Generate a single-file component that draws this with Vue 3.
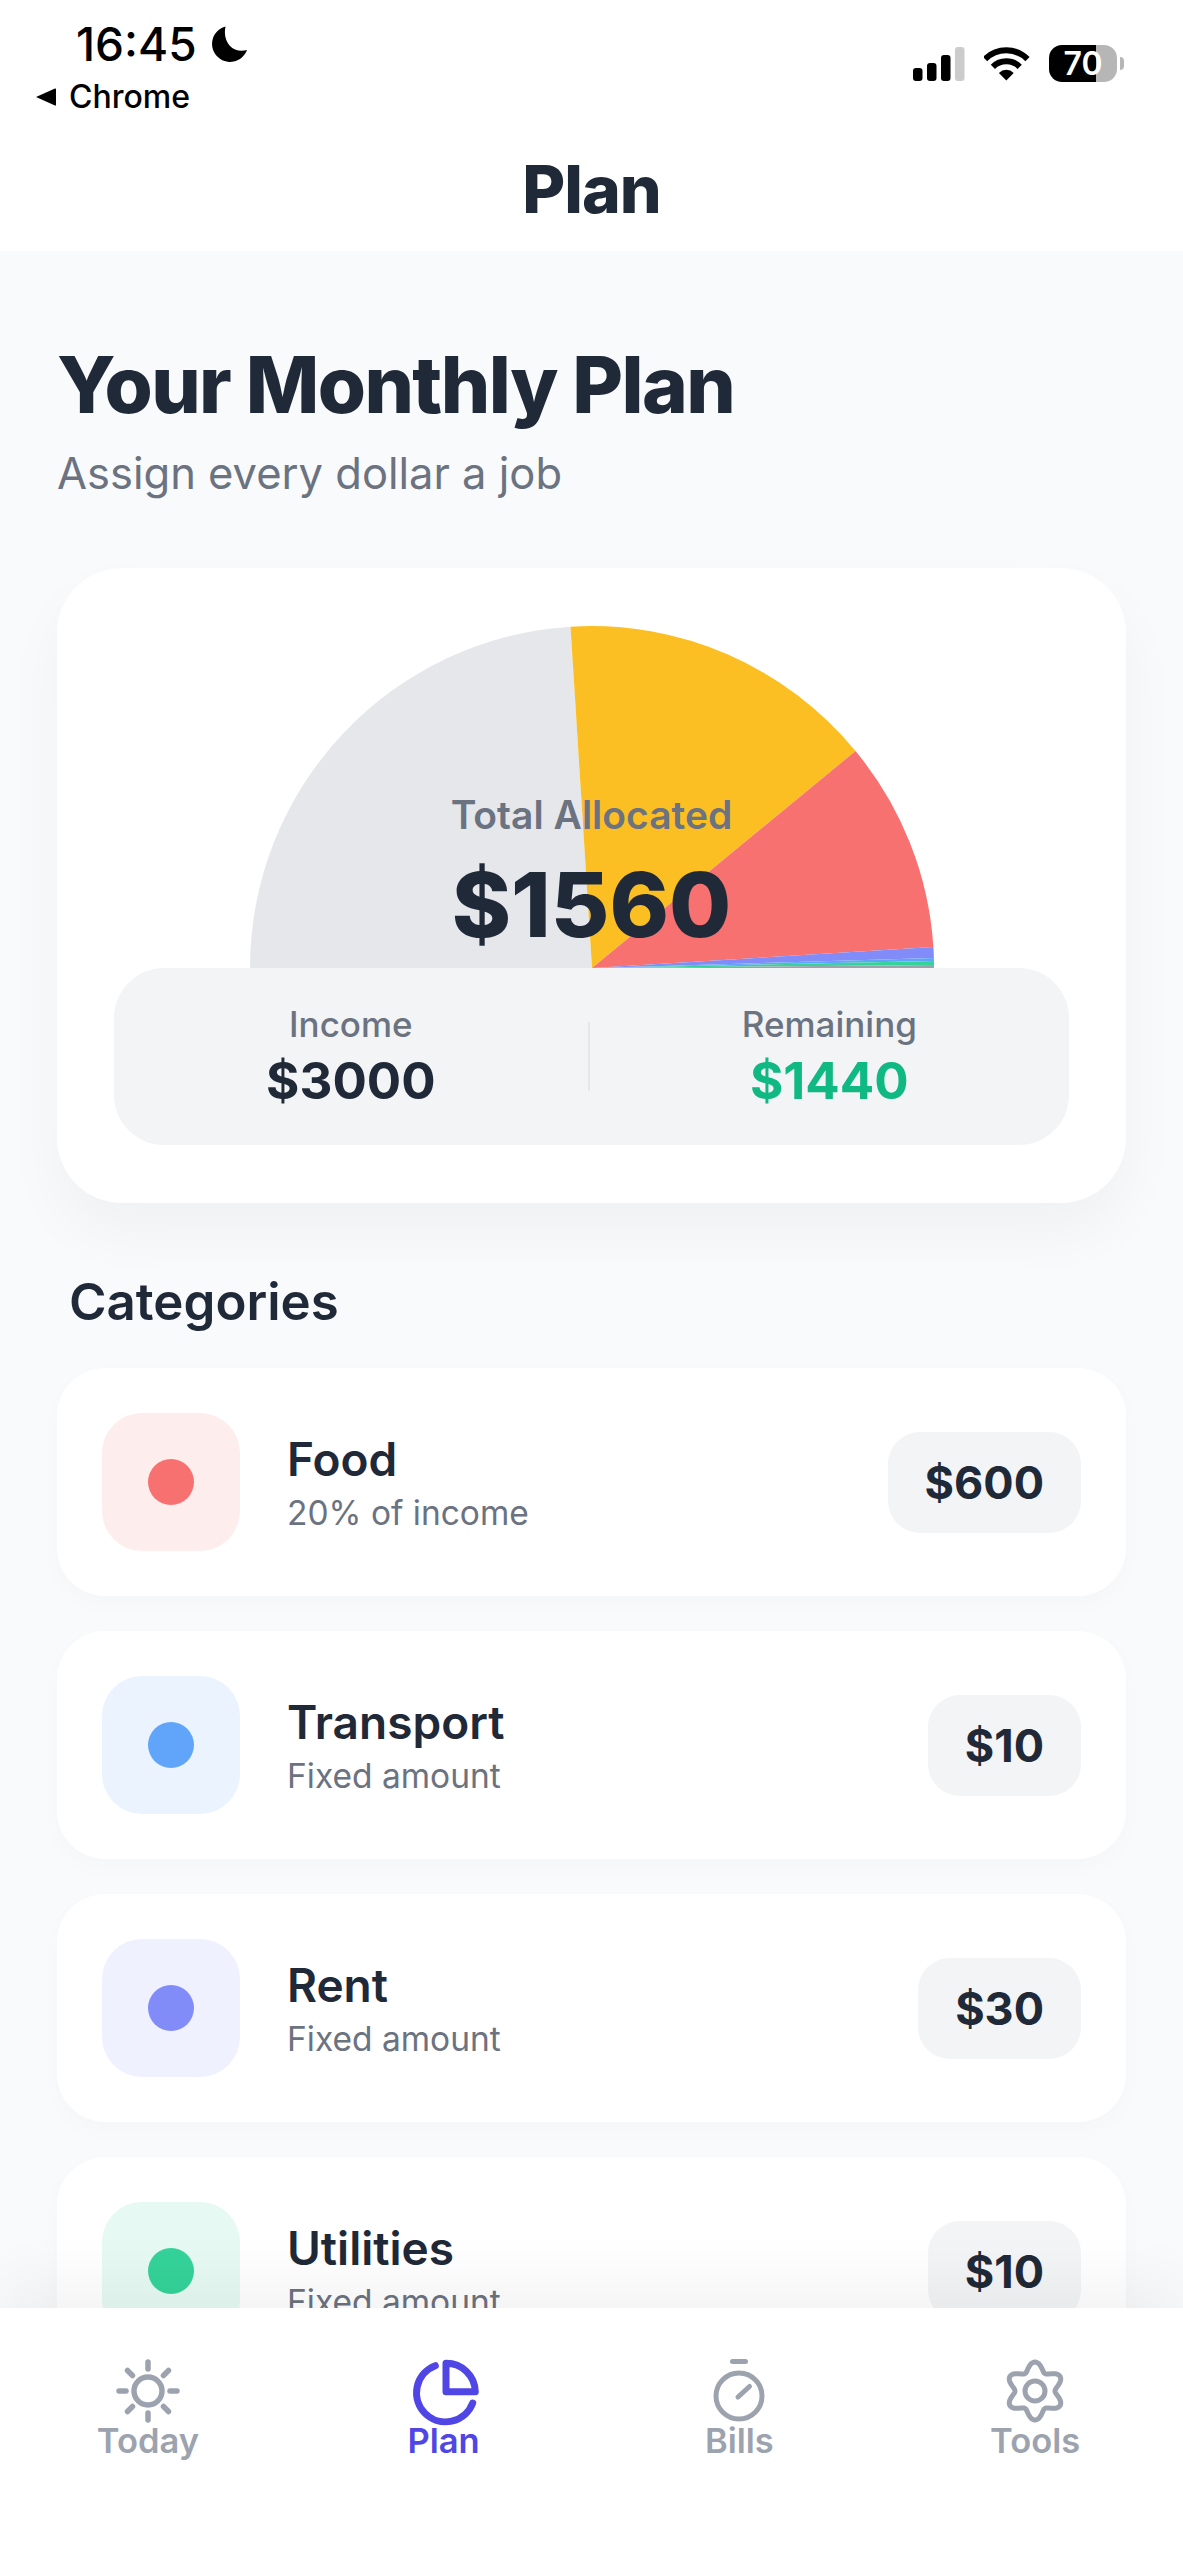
<template>
  <div class="screen">
    <header class="top">
      <div class="status">
        <div class="status-left">
          <div class="time-row">
            <span class="time">16:45</span>
            <svg class="moon" width="36" height="36" viewBox="0 0 36 36">
              <path d="M13.5 .5A18 18 0 1 0 35 24C22 28 10 17 13.5 .5Z" fill="#000" />
            </svg>
          </div>
          <div class="back-row">
            <svg width="20" height="18" viewBox="0 0 20 18">
              <path d="M0 9 19 .5Q20 0 20 1.500V16.500Q20 18 19 17.500Z" fill="#000" />
            </svg>
            <span class="back">Chrome</span>
          </div>
        </div>
        <div class="status-right">
          <svg width="52" height="34" viewBox="0 0 52 34">
            <rect x="0" y="21" width="9.500" height="13" rx="3" fill="#000" />
            <rect x="14" y="16" width="9.500" height="18" rx="3" fill="#000" />
            <rect x="28" y="8" width="9.500" height="26" rx="3" fill="#000" />
            <rect x="42" y="0" width="9.500" height="34" rx="3" fill="#ccc" />
          </svg>
          <svg width="46" height="34" viewBox="0 0 46 34">
            <path d="M1.100 12.100A30 30 0 0 1 43.500 12.100M8.900 19.900A19 19 0 0 1 35.700 19.900" fill="none" stroke="#000" stroke-width="6" />
            <path d="M22.300 33.500 14.900 25.900A10.500 10.500 0 0 1 29.700 25.900Z" fill="#000" />
          </svg>
          <div class="battery">70</div>
        </div>
      </div>
      <div class="page-title">Plan</div>
    </header>

    <main class="content">
      <h1 class="heading">Your Monthly Plan</h1>
      <p class="subheading">Assign every dollar a job</p>

      <section class="summary">
        <div class="chart">
          <svg width="684" height="342" viewBox="0 0 684 342">
            <path v-for="s in slices" :key="s.color" :d="s.d" :fill="s.color" />
          </svg>
          <div class="chart-center">
            <div class="chart-label">Total Allocated</div>
            <div class="chart-value">$1560</div>
          </div>
        </div>
        <div class="stats">
          <div class="stat">
            <div class="stat-label">Income</div>
            <div class="stat-value">$3000</div>
          </div>
          <div class="divider"></div>
          <div class="stat">
            <div class="stat-label">Remaining</div>
            <div class="stat-value green">$1440</div>
          </div>
        </div>
      </section>

      <h2 class="section-title">Categories</h2>
      <div class="rows">
        <div class="row" v-for="c in categories" :key="c.name">
          <div class="row-icon" :style="{ background: c.color + '20' }">
            <span class="dot" :style="{ background: c.color }"></span>
          </div>
          <div class="row-text">
            <div class="row-name">{{ c.name }}</div>
            <div class="row-sub">{{ c.sub }}</div>
          </div>
          <div class="amount">{{ c.amount }}</div>
        </div>
      </div>
    </main>

    <nav class="tabs">
      <div class="tab">
        <svg class="tab-icon" viewBox="0 0 64 64" fill="none" stroke="currentColor" stroke-width="5.500" stroke-linecap="round">
          <circle cx="32" cy="32" r="14" />
          <path d="M32 3V10M32 54V61M3 32H10M54 32H61M11.500 11.500 16.500 16.500M47.500 47.500 52.500 52.500M11.500 52.500 16.500 47.500M47.500 16.500 52.500 11.500" />
        </svg>
        <span>Today</span>
      </div>
      <div class="tab active">
        <svg class="tab-icon" viewBox="0 0 64 64" fill="none" stroke="currentColor" stroke-width="7" stroke-linecap="round" stroke-linejoin="round">
          <path d="M23.300 6.700A29 29 0 1 0 60.700 44" />
          <path d="M34 4.300V32.700H63.300A29 29 0 0 0 34 4.300Z" />
        </svg>
        <span>Plan</span>
      </div>
      <div class="tab">
        <svg class="tab-icon" viewBox="0 0 64 64" fill="none" stroke="currentColor" stroke-width="5" stroke-linecap="round">
          <circle cx="32" cy="37" r="23" />
          <path d="M25.500 2.500H38.500M31 38 42.500 27.500" />
        </svg>
        <span>Bills</span>
      </div>
      <div class="tab">
        <svg class="tab-icon" viewBox="0 0 64 64" fill="none" stroke="currentColor" stroke-width="5" stroke-linejoin="round">
          <path :d="gearPath" />
          <circle cx="32" cy="32" r="10" />
        </svg>
        <span>Tools</span>
      </div>
    </nav>
  </div>
</template>

<script setup>
const slices = [
  { color: '#e5e7eb', d: 'M342 342 0 342A342 342 0 0 1 320.500 .7Z' },
  { color: '#fbbf24', d: 'M342 342 320.500 .7A342 342 0 0 1 605.500 125Z' },
  { color: '#f87171', d: 'M342 342 605.500 125A342 342 0 0 1 683.400 321Z' },
  { color: '#818cf8', d: 'M342 342 683.400 321A342 342 0 0 1 683.900 332Z' },
  { color: '#60a5fa', d: 'M342 342 683.900 332V335Z' },
  { color: '#34d399', d: 'M342 342 683.900 335 684 339Z' },
  { color: '#9ca3af', d: 'M342 342 684 339V342Z' }
]

const categories = [
  { name: 'Food', sub: '20% of income', amount: '$600', color: '#f87171' },
  { name: 'Transport', sub: 'Fixed amount', amount: '$10', color: '#60a5fa' },
  { name: 'Rent', sub: 'Fixed amount', amount: '$30', color: '#818cf8' },
  { name: 'Utilities', sub: 'Fixed amount', amount: '$10', color: '#34d399' }
]

// six soft lobes, one pointing straight up
const gearPoints = []
for (let i = 0; i < 144; i++) {
  const a = (i / 144) * Math.PI * 2
  const r = 24.5 + 4.5 * Math.cos(6 * a)
  const x = 32 + r * Math.sin(a)
  const y = 32 - r * Math.cos(a)
  gearPoints.push(`${x.toFixed(2)} ${y.toFixed(2)}`)
}
const gearPath = 'M' + gearPoints.join('L') + 'Z'
</script>

<style scoped>
.screen {
  width: 1183px;
  height: 2560px;
  display: flex;
  flex-direction: column;
  overflow: hidden;
  background: #f9fafb;
  font-family: Inter, "Noto Sans", sans-serif;
  color: #1f2937;
}

.top {
  height: 251px;
  flex-shrink: 0;
  background: #fff;
}

.status {
  height: 130px;
  display: flex;
  justify-content: space-between;
  align-items: flex-start;
  color: #000;
}

.status-left {
  padding: 18px 0 0 36px;
}

.time-row {
  display: flex;
  align-items: center;
  padding-left: 40px;
  height: 52px;
}

.time {
  font-size: 46px;
  font-weight: 500;
  line-height: 52px;
}

.moon {
  margin-left: 15px;
}

.back-row {
  display: flex;
  align-items: center;
  gap: 13px;
  height: 40px;
  margin-top: 7px;
}

.back {
  font-size: 32px;
  font-weight: 500;
  line-height: 40px;
}

.status-right {
  display: flex;
  align-items: center;
  gap: 19px;
  padding: 45px 66px 0 0;
}

.battery {
  position: relative;
  width: 68px;
  height: 37px;
  border-radius: 13px;
  background: linear-gradient(90deg, #000 69%, #b6b6b6 69%);
  color: #fff;
  font-size: 32px;
  font-weight: 600;
  line-height: 37px;
  text-align: center;
}

.battery::after {
  content: "";
  position: absolute;
  right: -7px;
  top: 12px;
  width: 4px;
  height: 13px;
  border-radius: 0 6px 6px 0;
  background: #b6b6b6;
}

.page-title {
  height: 117px;
  display: flex;
  align-items: center;
  justify-content: center;
  font-size: 66px;
  font-weight: 800;
  letter-spacing: -1px;
}

.content {
  flex: 1;
  min-height: 0;
  overflow: hidden;
  padding: 0 57px;
}

.heading {
  margin: 87px 0 0;
  font-size: 78px;
  font-weight: 800;
  line-height: 94px;
  letter-spacing: -1.600px;
}

.subheading {
  margin: 14px 0 0;
  font-size: 43.500px;
  line-height: 54px;
  color: #6b7280;
}

.summary {
  margin-top: 68px;
  height: 635px;
  padding: 58px 57px;
  box-sizing: border-box;
  background: #fff;
  border-radius: 65px;
  box-shadow: 0 30px 60px rgba(0, 0, 0, 0.04);
}

.chart {
  position: relative;
  width: 684px;
  height: 342px;
  margin: 0 auto;
}

.chart svg {
  display: block;
}

.chart-center {
  position: absolute;
  left: 0;
  right: 0;
  bottom: 9px;
  text-align: center;
}

.chart-label {
  font-size: 39px;
  font-weight: 600;
  line-height: 46px;
  color: #6b7280;
  margin-bottom: 13px;
}

.chart-value {
  font-size: 90px;
  font-weight: 800;
  line-height: 108px;
}

.stats {
  display: flex;
  align-items: center;
  height: 177px;
  background: #f3f4f6;
  border-radius: 50px;
}

.stat {
  flex: 1 1 auto;
  text-align: center;
}

.stat-label {
  font-size: 35px;
  font-weight: 500;
  line-height: 42px;
  color: #6b7280;
}

.stat-value {
  margin-top: 6px;
  font-size: 51px;
  font-weight: 700;
  line-height: 60px;
}

.green {
  color: #10b981;
}

.divider {
  width: 2px;
  height: 69px;
  background: #e5e7eb;
}

.section-title {
  margin: 68px 0 35px;
  padding-left: 12px;
  font-size: 51px;
  font-weight: 600;
  line-height: 62px;
}

.rows {
  display: flex;
  flex-direction: column;
  gap: 35px;
}

.row {
  display: flex;
  align-items: center;
  padding: 45px;
  background: #fff;
  border-radius: 48px;
  box-shadow: 0 8px 24px rgba(0, 0, 0, 0.02);
}

.row-icon {
  width: 138px;
  height: 138px;
  flex-shrink: 0;
  display: flex;
  align-items: center;
  justify-content: center;
  border-radius: 40px;
}

.dot {
  width: 46px;
  height: 46px;
  border-radius: 50%;
}

.row-text {
  flex: 1;
  margin-left: 47px;
}

.row-name {
  font-size: 46px;
  font-weight: 600;
  line-height: 58px;
}

.row-sub {
  margin-top: 3px;
  font-size: 33.500px;
  line-height: 44px;
  color: #6b7280;
}

.amount {
  padding: 0 37px;
  height: 101px;
  display: flex;
  align-items: center;
  background: #f3f4f6;
  border-radius: 32px;
  font-size: 45px;
  font-weight: 700;
}

.tabs {
  position: relative;
  height: 252px;
  flex-shrink: 0;
  display: flex;
  box-sizing: border-box;
  padding-top: 51px;
  background: #fff;
  box-shadow: 0 -24px 60px rgba(0, 0, 0, 0.05);
}

.tab {
  flex: 1;
  display: flex;
  flex-direction: column;
  align-items: center;
  font-size: 34.500px;
  font-weight: 600;
  line-height: 36px;
  color: #9ca3af;
}

.tab.active {
  color: #4f46e5;
}

.tab-icon {
  width: 64px;
  height: 64px;
  overflow: visible;
}
</style>
